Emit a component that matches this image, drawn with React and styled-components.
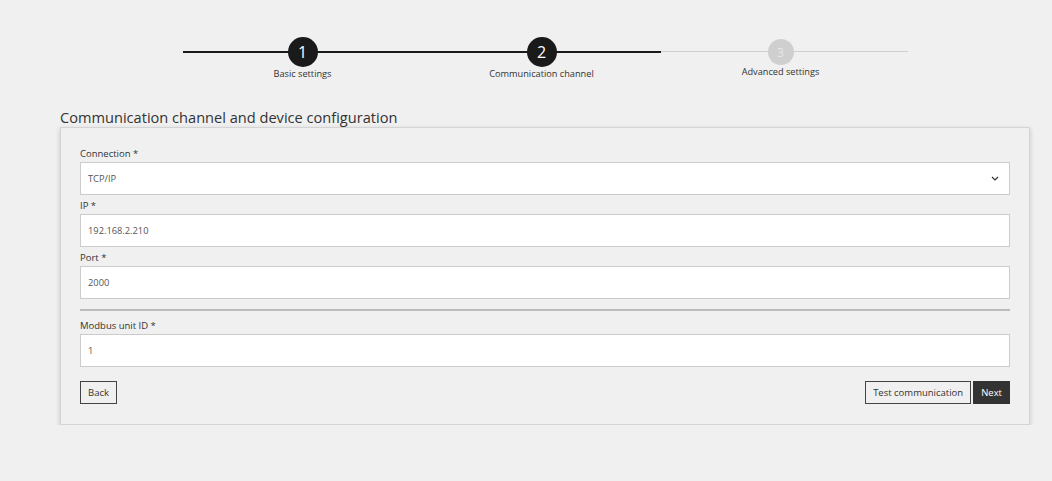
import React from 'react';
import styled, {createGlobalStyle} from 'styled-components';

const GlobalStyle = createGlobalStyle`
    body {
        margin: 0;
        background: #f0f0f0;
        font-family: "Open Sans", "Noto Sans", sans-serif;
        color: #333;
    }
`

const Page = styled.div`
    padding: 37px 22px 0 60px;
`
const Stepper = styled.div`
    display: flex;
    width: 717px;
    margin: 0 0 0 123px;
`
const Step = styled.div`
    flex: 1;
    display: flex;
    flex-direction: column;
    align-items: center;
    position: relative;
    &::before {
        content: '';
        position: absolute;
        left: 0;
        right: ${p => p.last ? '-8px' : '0'};
        top: 14px;
        height: ${p => p.done ? '1.5px' : '1px'};
        background: ${p => p.done ? '#1a1a1a' : '#cfcfcf'};
    }
`
const Circle = styled.div`
    position: relative;
    width: ${p => p.active ? '30px' : '26px'};
    height: ${p => p.active ? '30px' : '26px'};
    margin-top: ${p => p.active ? '0' : '2px'};
    border-radius: 50%;
    background: ${p => p.active ? '#1a1a1a' : '#cfcfcf'};
    color: ${p => p.active ? '#fff' : '#e6e6e6'};
    font-size: ${p => p.active ? '16px' : '12px'};
    display: flex;
    align-items: center;
    justify-content: center;
`
const StepLabel = styled.div`
    font-size: 9.2px;
    line-height: 12px;
    margin-top: 1px;
    color: #333;
`
const Title = styled.h2`
    font-size: 14.6px;
    font-weight: 400;
    margin: 27px 0 0;
    line-height: 20px;
    color: #333;
`
const Card = styled.div`
    border: 1px solid #d4d4d4;
    background: #f0f0f0;
    box-shadow: 0 2px 5px rgba(0, 0, 0, 0.18);
    padding: 20px 19px 20px 19px;
`
const Field = styled.div`
    display: flex;
    flex-direction: column;
    margin-bottom: 5px;
`
const Label = styled.label`
    font-size: 9.5px;
    line-height: 12px;
    margin-bottom: 2px;
    color: #333;
`
const InputBox = styled.div`
    height: 31px;
    border: 1px solid #ccc;
    background: #fff;
    display: flex;
    align-items: center;
    justify-content: space-between;
    padding: 0 10px 0 7px;
    font-size: 9.3px;
    color: #555;
`
const Divider = styled.div`
    height: 2px;
    background: #bbb;
    margin: 10px 0 9px;
`
const Actions = styled.div`
    display: flex;
    align-items: center;
    margin-top: 14px;
    gap: 2px;
`
const Spacer = styled.div`
    flex: 1;
`
const Button = styled.button`
    height: 23px;
    padding: 0 7px;
    font-family: inherit;
    font-size: 9.5px;
    border: 1px solid ${p => p.primary ? '#333' : '#444'};
    background: ${p => p.primary ? '#333' : 'transparent'};
    color: ${p => p.primary ? '#fff' : '#333'};
    cursor: pointer;
`

const Chevron = () => (
    <svg width="8" height="5" viewBox="0 0 8 5" fill="none">
        <path d="M1 1l3 3 3-3" stroke="#333" strokeWidth="1.2" />
    </svg>
)

const steps = [
    {n: 1, label: 'Basic settings', active: true, done: true},
    {n: 2, label: 'Communication channel', active: true, done: true},
    {n: 3, label: 'Advanced settings', active: false, done: false}
]

export default function App() {
    return (
        <>
            <GlobalStyle />
            <Page>
                <Stepper>
                    {steps.map((s, i) => (
                        <Step key={s.n} done={s.done} last={i === steps.length - 1}>
                            <Circle active={s.active}>{s.n}</Circle>
                            <StepLabel>{s.label}</StepLabel>
                        </Step>
                    ))}
                </Stepper>
                <Title>Communication channel and device configuration</Title>
                <Card>
                    <Field>
                        <Label>Connection *</Label>
                        <InputBox>TCP/IP <Chevron /></InputBox>
                    </Field>
                    <Field>
                        <Label>IP *</Label>
                        <InputBox>192.168.2.210</InputBox>
                    </Field>
                    <Field>
                        <Label>Port *</Label>
                        <InputBox>2000</InputBox>
                    </Field>
                    <Divider />
                    <Field>
                        <Label>Modbus unit ID *</Label>
                        <InputBox>1</InputBox>
                    </Field>
                    <Actions>
                        <Button>Back</Button>
                        <Spacer />
                        <Button>Test communication</Button>
                        <Button primary>Next</Button>
                    </Actions>
                </Card>
            </Page>
        </>
    );
}
